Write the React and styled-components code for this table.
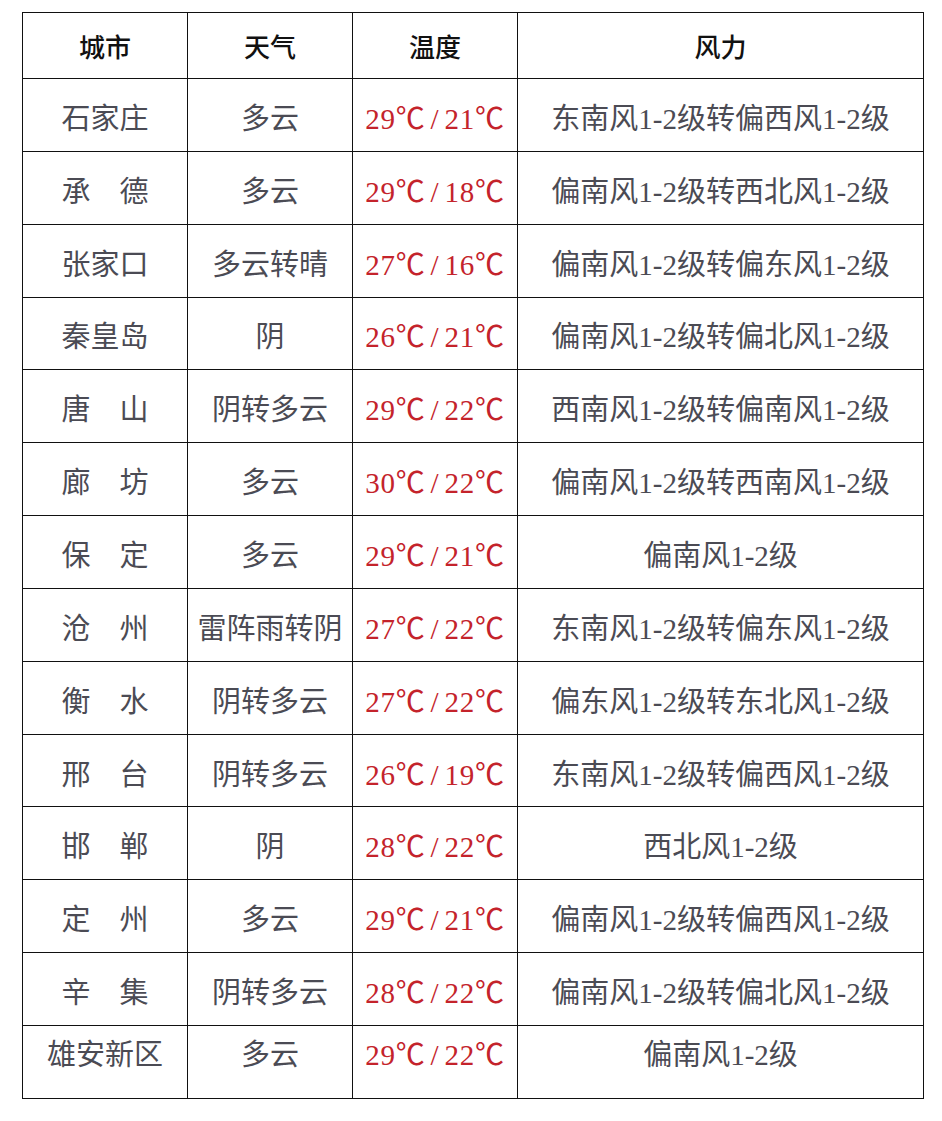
import React from "react";
import styled, { createGlobalStyle } from "styled-components";

const GlobalStyle = createGlobalStyle`
  html, body {
    margin: 0;
    padding: 0;
    background: #ffffff;
  }
  body {
    font-family: "Liberation Serif", "Noto Sans CJK SC", serif;
  }
`;

const Page = styled.div`
  width: 942px;
  height: 1121px;
  padding: 12px 0 0 22px;
  box-sizing: border-box;
  background: #fff;
`;

const Table = styled.table`
  width: 901px;
  border-collapse: collapse;
  table-layout: fixed;
`;

const Col = styled.col`
  width: ${(p) => p.$w}px;
`;

const HeadCell = styled.th`
  height: 65px;
  padding: 0;
  border: 1.5px solid #111;
  color: #111;
  font-size: 26px;
  font-weight: 500;
  text-align: center;
  vertical-align: middle;
`;

const Row = styled.tr`
  height: 72.85px;
`;

const Cell = styled.td`
  padding: ${(p) => (p.$last ? "0 0 20px" : "2px 0 0")};
  border: 1.5px solid #111;
  color: #4b4b54;
  font-size: 29px;
  text-align: center;
  vertical-align: middle;
  white-space: nowrap;
`;

const TempCell = styled(Cell)`
  color: #c4232b;
  letter-spacing: 0.8px;
`;

const Slash = styled.span`
  margin: 0 5px;
`;

const rows = [
  ["石家庄", "多云", "29", "21", "东南风1-2级转偏西风1-2级"],
  ["承　德", "多云", "29", "18", "偏南风1-2级转西北风1-2级"],
  ["张家口", "多云转晴", "27", "16", "偏南风1-2级转偏东风1-2级"],
  ["秦皇岛", "阴", "26", "21", "偏南风1-2级转偏北风1-2级"],
  ["唐　山", "阴转多云", "29", "22", "西南风1-2级转偏南风1-2级"],
  ["廊　坊", "多云", "30", "22", "偏南风1-2级转西南风1-2级"],
  ["保　定", "多云", "29", "21", "偏南风1-2级"],
  ["沧　州", "雷阵雨转阴", "27", "22", "东南风1-2级转偏东风1-2级"],
  ["衡　水", "阴转多云", "27", "22", "偏东风1-2级转东北风1-2级"],
  ["邢　台", "阴转多云", "26", "19", "东南风1-2级转偏西风1-2级"],
  ["邯　郸", "阴", "28", "22", "西北风1-2级"],
  ["定　州", "多云", "29", "21", "偏南风1-2级转偏西风1-2级"],
  ["辛　集", "阴转多云", "28", "22", "偏南风1-2级转偏北风1-2级"],
  ["雄安新区", "多云", "29", "22", "偏南风1-2级"],
];

export default function App() {
  return (
    <>
      <GlobalStyle />
      <Page>
        <Table>
          <colgroup>
            <Col $w={165} />
            <Col $w={165} />
            <Col $w={165} />
            <Col $w={406} />
          </colgroup>
          <thead>
            <tr>
              <HeadCell>城市</HeadCell>
              <HeadCell>天气</HeadCell>
              <HeadCell>温度</HeadCell>
              <HeadCell>风力</HeadCell>
            </tr>
          </thead>
          <tbody>
            {rows.map(([city, weather, high, low, wind], i) => {
              const last = i === rows.length - 1;
              return (
                <Row key={city}>
                  <Cell $last={last}>{city}</Cell>
                  <Cell $last={last}>{weather}</Cell>
                  <TempCell $last={last}>
                    {high}℃<Slash>/</Slash>{low}℃
                  </TempCell>
                  <Cell $last={last}>{wind}</Cell>
                </Row>
              );
            })}
          </tbody>
        </Table>
      </Page>
    </>
  );
}
